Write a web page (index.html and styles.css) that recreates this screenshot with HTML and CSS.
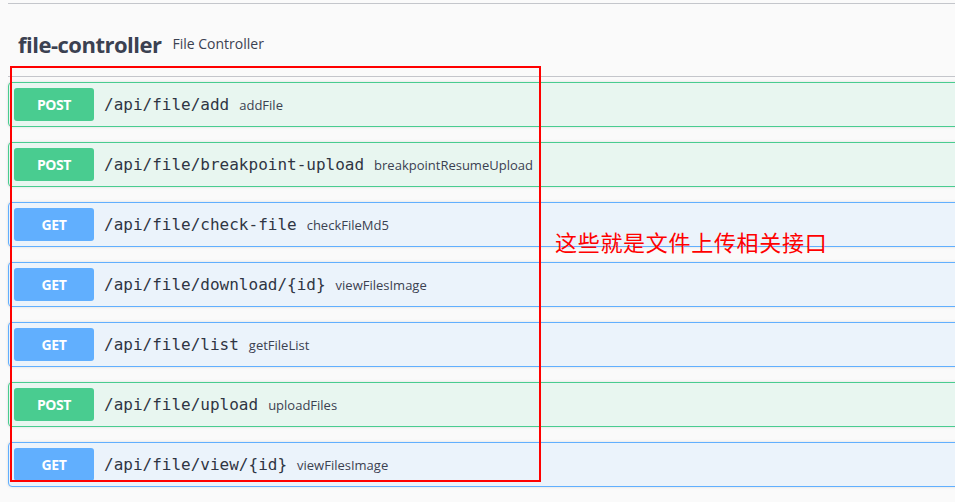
FILE: index.html
```html
<!DOCTYPE html>
<html lang="zh">
<head>
<meta charset="utf-8">
<link rel="stylesheet" href="styles.css">
</head>
<body>
<div class="page">
  <div class="prev-tag"></div>
  <h3 class="tag-head">
    <span class="tag-name">file-controller</span>
    <small class="tag-desc">File Controller</small>
  </h3>
  <div class="ops">
    <div class="op post"><span class="method">POST</span><span class="path">/api/file/add</span><span class="summary">addFile</span></div>
    <div class="op post"><span class="method">POST</span><span class="path">/api/file/breakpoint-upload</span><span class="summary">breakpointResumeUpload</span></div>
    <div class="op get"><span class="method">GET</span><span class="path">/api/file/check-file</span><span class="summary">checkFileMd5</span></div>
    <div class="op get"><span class="method">GET</span><span class="path">/api/file/download/{id}</span><span class="summary">viewFilesImage</span></div>
    <div class="op get"><span class="method">GET</span><span class="path">/api/file/list</span><span class="summary">getFileList</span></div>
    <div class="op post"><span class="method">POST</span><span class="path">/api/file/upload</span><span class="summary">uploadFiles</span></div>
    <div class="op get"><span class="method">GET</span><span class="path">/api/file/view/{id}</span><span class="summary">viewFilesImage</span></div>
  </div>
  <div class="mark-box"></div>
  <div class="mark-note">这些就是文件上传相关接口</div>
</div>
</body>
</html>
```

FILE: styles.css
```css
html, body {
  margin: 0;
  padding: 0;
  background: #fafafa;
  overflow: hidden;
}
.page {
  position: relative;
  width: 955px;
  height: 502px;
  padding-left: 8px;
  box-sizing: border-box;
  font-family: "Open Sans", sans-serif;
  color: #3b4151;
  overflow: hidden;
}
.prev-tag {
  height: 3px;
  border-bottom: 1px solid #c4c6cb;
  margin-right: -100px;
}
.tag-head {
  margin: 0 -100px 5px 0;
  height: 73px;
  box-sizing: border-box;
  border-bottom: 1px solid #c4c6cb;
  display: flex;
  align-items: center;
  padding: 7px 0 0 10px;
  font-weight: 400;
}
.tag-name {
  font-family: "Open Sans", sans-serif;
  font-weight: 700;
  font-size: 22px;
  letter-spacing: -0.5px;
  color: #3b4151;
}
.tag-desc {
  margin-left: 11px;
  font-size: 14px;
  color: #3b4151;
}
.ops {
  display: flex;
  flex-direction: column;
  gap: 15px;
  margin-right: -200px;
}
.op {
  height: 45px;
  box-sizing: border-box;
  border: 1px solid;
  border-radius: 4px;
  display: flex;
  align-items: center;
  padding-left: 5px;
  box-shadow: 0 0 3px rgba(0,0,0,.12);
}
.op.post {
  background: #e8f6f0;
  border-color: #49cc90;
}
.op.get {
  background: #ebf3fb;
  border-color: #61affe;
}
.method {
  width: 80px;
  height: 33px;
  border-radius: 3px;
  display: flex;
  align-items: center;
  justify-content: center;
  color: #fff;
  font-weight: 700;
  font-size: 14px;
  letter-spacing: -0.4px;
}
.post .method { background: #49cc90; }
.get .method { background: #61affe; }
.path {
  margin-left: 10px;
  font-family: "DejaVu Sans Mono", monospace;
  font-size: 16px;
  color: #2f3543;
}
.summary {
  margin-left: 10px;
  font-size: 13px;
  color: #3b4151;
}
.mark-box {
  position: absolute;
  left: 10px;
  top: 66px;
  width: 531px;
  height: 416px;
  box-sizing: border-box;
  border: 2px solid #ff0000;
}
.mark-note {
  position: absolute;
  left: 555px;
  top: 226px;
  font-family: "Noto Sans CJK SC", sans-serif;
  font-size: 22px;
  line-height: 30px;
  color: #ff0000;
  letter-spacing: 0.7px;
}
```
